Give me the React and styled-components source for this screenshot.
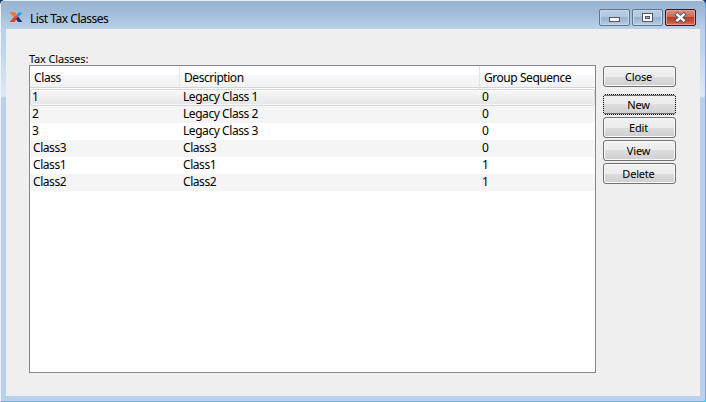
import React from "react";
import styled, { createGlobalStyle } from "styled-components";

const GlobalStyle = createGlobalStyle`
  * { box-sizing: border-box; }
  html, body { margin: 0; overflow: hidden; background: #17365f; }
`;

const Window = styled.div`
  width: 706px;
  height: 402px;
  display: flex;
  flex-direction: column;
  padding: 0 5px 5px;
  border: 1px solid #3fc4dc;
  border-top-color: #e4eef8;
  border-left-color: #eef4fb;
  border-radius: 5px 5px 0 0;
  background: linear-gradient(#99b4d1 0, #a6c0dd 12px, #b9d1ea 28px, #bdd4ec 45px, #dce9f6 94px, #d9e7f5 95px, #b9d1ea 97px);
  font-family: "Noto Sans", sans-serif;
  color: #000;
`;

const TitleBar = styled.header`
  height: 28px;
  margin: 0 -5px;
  padding: 8px 9px 0 8px;
  display: flex;
  flex: none;
  align-items: flex-start;
  border-radius: 4px 4px 0 0;
  background: linear-gradient(#98b3d0, #a2bcd9 45%, #b9d1ea);
`;

const AppIcon = styled.svg`
  width: 14px;
  height: 11px;
  margin-top: 3px;
  flex: none;
`;

const Title = styled.h1`
  flex: 1;
  margin: 1px 0 0 7px;
  font-size: 12px;
  font-weight: 400;
  line-height: 17px;
  letter-spacing: -0.47px;
  white-space: nowrap;
`;

const Controls = styled.div`
  display: flex;
  gap: 2px;
`;

const ControlButton = styled.button`
  width: 31px;
  height: 17px;
  padding: 0;
  border: 1px solid ${(p) => (p.$close ? "#431422" : "#60748d")};
  border-radius: 2px;
  box-shadow: inset 0 0 0 1px ${(p) => (p.$close ? "#df9d91" : "#c5d7ea")};
  background: ${(p) =>
    p.$close
      ? "linear-gradient(#d99082 0, #cb6b58 46%, #b53b26 48%, #c6533d 80%, #d78169 100%)"
      : "linear-gradient(#b9cde3 0, #b2c7df 46%, #98b3d0 48%, #a8c1dc 80%, #bad1e9 100%)"};
  svg { display: block; }
`;

const Client = styled.main`
  flex: 1;
  min-height: 0;
  display: flex;
  gap: 7px;
  padding: 23px;
  background: #efefef;
`;

const ListPane = styled.section`
  width: 567px;
  display: flex;
  flex-direction: column;
`;

const Label = styled.div`
  height: 13px;
  font-size: 11px;
  line-height: 14px;
  letter-spacing: -0.15px;
`;

const Table = styled.div`
  height: 308px;
  border: 1px solid #828790;
  background: #fff;
  font-size: 12px;
`;

const HeaderRow = styled.div`
  display: grid;
  grid-template-columns: 150px 300px 1fr;
  height: 22px;
  margin-bottom: 1px;
  border-bottom: 1px solid #d5d5d5;
  background: linear-gradient(#fff 0 9px, #f7f8fa 9px, #f1f2f4 21px);
`;

const HeaderCell = styled.div`
  padding-left: 4px;
  border-right: ${(p) => (p.$last ? "0" : "1px solid #e3e4e6")};
  line-height: 24px;
  letter-spacing: ${(p) => p.$track}px;
  white-space: nowrap;
`;

const Row = styled.div`
  display: grid;
  grid-template-columns: 150px 300px 1fr;
  height: 17px;
  background: ${(p) => (p.$alt ? "#f5f5f5" : "#fff")};
  ${(p) =>
    p.$selected &&
    `background: linear-gradient(#f9f9f9, #e5e5e5);
     border-radius: 3px;
     box-shadow: inset 0 0 0 1px #d9d9d9, inset 0 0 0 2px #f8f8f8;`}
`;

const Cell = styled.div`
  padding-left: ${(p) => (p.$number ? 2 : 3)}px;
  line-height: 15px;
  letter-spacing: -0.44px;
  white-space: nowrap;
`;

const ButtonColumn = styled.nav`
  width: 73px;
  padding-top: 14px;
  display: flex;
  flex-direction: column;
  gap: 2px;
`;

const PushButton = styled.button`
  height: 21px;
  flex: none;
  padding: 0 2px 0 0;
  margin-bottom: ${(p) => (p.$spaced ? 5 : 0)}px;
  border: 1px solid #707070;
  border-radius: 3px;
  box-shadow: inset 0 0 0 1px #fafafa;
  background: linear-gradient(#f2f2f2 0, #ebebeb 50%, #dddddd 50%, #cfcfcf 100%);
  font-family: "Noto Sans", sans-serif;
  font-size: 11px;
  line-height: 19px;
  letter-spacing: -0.2px;
  color: #000;
  ${(p) =>
    p.$focused &&
    `border: 0;
     padding: 0 2px 0 0;
     box-shadow: none;
     background:
       repeating-linear-gradient(90deg, #000 0 1px, #d8d8d8 1px 2px) 0 0 / 100% 1px no-repeat,
       repeating-linear-gradient(90deg, #000 0 1px, #d8d8d8 1px 2px) 0 100% / 100% 1px no-repeat,
       repeating-linear-gradient(#000 0 1px, #d8d8d8 1px 2px) 0 0 / 1px 100% no-repeat,
       repeating-linear-gradient(#000 0 1px, #d8d8d8 1px 2px) 100% 0 / 1px 100% no-repeat,
       linear-gradient(#707070, #707070) 0 1px / 100% 1px no-repeat,
       linear-gradient(#707070, #707070) 0 19px / 100% 1px no-repeat,
       linear-gradient(#f2f2f2 0, #ebebeb 50%, #dddddd 50%, #cfcfcf 100%);`}
`;

const columns = [
  { name: "Class", track: -0.4 },
  { name: "Description", track: -0.45 },
  { name: "Group Sequence", track: -0.45 },
];

const rows = [
  ["1", "Legacy Class 1", "0"],
  ["2", "Legacy Class 2", "0"],
  ["3", "Legacy Class 3", "0"],
  ["Class3", "Class3", "0"],
  ["Class1", "Class1", "1"],
  ["Class2", "Class2", "1"],
];

const actions = ["Close", "New", "Edit", "View", "Delete"];

export default function App() {
  return (
    <>
      <GlobalStyle />
      <Window>
        <TitleBar>
          <AppIcon viewBox="0 0 14 11">
            <path d="M1 .5h5l3 4.5-3.5 5H.5L5 5z" fill="#d8452c" />
            <path d="M1 .5h5l2 3-2.5 2z" fill="#f0782c" />
            <path d="M9.5 .5h4L9.5 5 7.5 3.5z" fill="#209bd6" />
            <path d="M8 5.5l1.5-.5 4 5H9L7.2 7.5z" fill="#2a3078" />
          </AppIcon>
          <Title>List Tax Classes</Title>
          <Controls>
            <ControlButton aria-label="Minimize">
              <svg width="29" height="15" shapeRendering="crispEdges">
                <rect x="9.5" y="7.5" width="10" height="4" rx="1" fill="#fff" stroke="#535666" />
              </svg>
            </ControlButton>
            <ControlButton aria-label="Maximize">
              <svg width="29" height="15" shapeRendering="crispEdges">
                <rect x="9.5" y="3.5" width="10" height="8" fill="#fff" stroke="#535666" />
                <rect x="12.5" y="6.5" width="4" height="2" fill="#9eb7d3" stroke="#535666" />
              </svg>
            </ControlButton>
            <ControlButton $close aria-label="Close window">
              <svg width="29" height="15">
                <path d="M11.3 4.6l6.4 5.8M17.7 4.6l-6.4 5.8" stroke="#535666" strokeWidth="4.2" strokeLinecap="square" />
                <path d="M11.3 4.6l6.4 5.8M17.7 4.6l-6.4 5.8" stroke="#fff" strokeWidth="2.4" strokeLinecap="square" />
              </svg>
            </ControlButton>
          </Controls>
        </TitleBar>
        <Client>
          <ListPane>
            <Label>Tax Classes:</Label>
            <Table>
              <HeaderRow>
                {columns.map((c, i) => (
                  <HeaderCell key={c.name} $track={c.track} $last={i === 2}>{c.name}</HeaderCell>
                ))}
              </HeaderRow>
              {rows.map(([cls, description, sequence], i) => (
                <Row key={cls} $selected={i === 0} $alt={i % 2 === 1}>
                  <Cell $number={cls.length === 1}>{cls}</Cell>
                  <Cell>{description}</Cell>
                  <Cell $number>{sequence}</Cell>
                </Row>
              ))}
            </Table>
          </ListPane>
          <ButtonColumn>
            {actions.map((name) => (
              <PushButton key={name} $spaced={name === "Close"} $focused={name === "New"}>{name}</PushButton>
            ))}
          </ButtonColumn>
        </Client>
      </Window>
    </>
  );
}
